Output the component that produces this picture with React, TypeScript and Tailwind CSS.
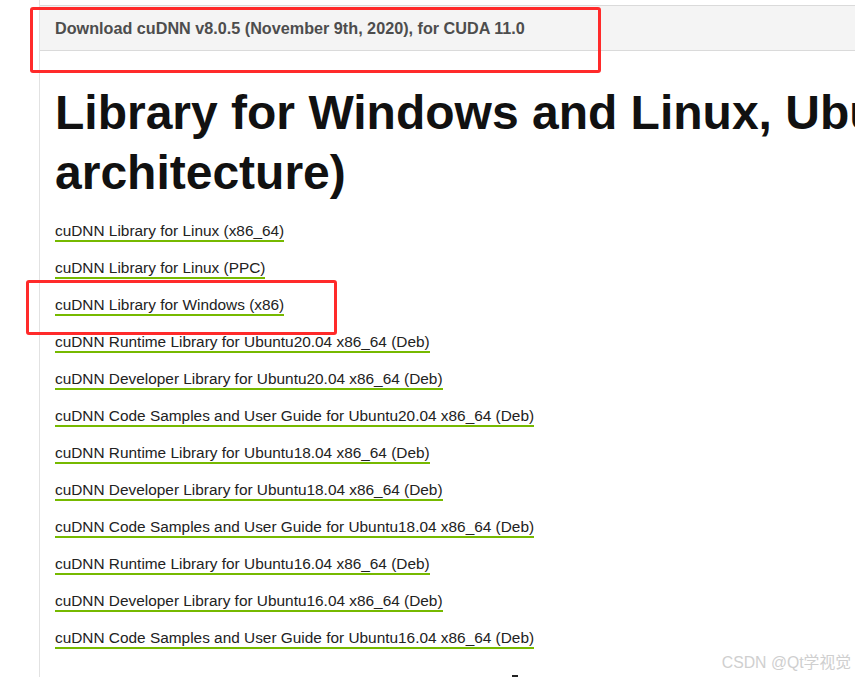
import React from 'react';

// ─── Data ─────────────────────────────────────────────────────────────────────

const LINKS: string[] = [
  'cuDNN Library for Linux (x86_64)',
  'cuDNN Library for Linux (PPC)',
  'cuDNN Library for Windows (x86)',
  'cuDNN Runtime Library for Ubuntu20.04 x86_64 (Deb)',
  'cuDNN Developer Library for Ubuntu20.04 x86_64 (Deb)',
  'cuDNN Code Samples and User Guide for Ubuntu20.04 x86_64 (Deb)',
  'cuDNN Runtime Library for Ubuntu18.04 x86_64 (Deb)',
  'cuDNN Developer Library for Ubuntu18.04 x86_64 (Deb)',
  'cuDNN Code Samples and User Guide for Ubuntu18.04 x86_64 (Deb)',
  'cuDNN Runtime Library for Ubuntu16.04 x86_64 (Deb)',
  'cuDNN Developer Library for Ubuntu16.04 x86_64 (Deb)',
  'cuDNN Code Samples and User Guide for Ubuntu16.04 x86_64 (Deb)',
];

// ─── Page ─────────────────────────────────────────────────────────────────────

export default function App() {
  return (
    <div className="relative w-[855px] h-[677px] overflow-hidden bg-white font-['Liberation_Sans',Arial,sans-serif]">
      <div className="ml-[39px] h-full border-l border-[#e2e2e2] pt-[5px]">
        {/* Release header band */}
        <div className="flex h-[46px] items-center border-y border-[#dadada] bg-[#f4f4f4] px-[15px]">
          <span className="text-[16.2px] font-bold text-[#4d4d4d] whitespace-nowrap">
            Download cuDNN v8.0.5 (November 9th, 2020), for CUDA 11.0
          </span>
        </div>

        {/* Title — runs past the right edge like the page does */}
        <h1 className="mt-[32px] pl-[15px] text-[48px] font-bold leading-[60px] text-[#111] whitespace-nowrap">
          <div>Library for Windows and Linux, Ubuntu(x86_64</div>
          <div>architecture)</div>
        </h1>

        {/* Download links */}
        <ul className="mt-[16px] flex flex-col gap-[17px] pl-[15px]">
          {LINKS.map((l) => (
            <li key={l} className="h-[20px]">
              <a className="inline-block border-b-2 border-[#76b900] text-[15.4px] leading-[18px] text-[#222] whitespace-nowrap">
                {l}
              </a>
            </li>
          ))}
        </ul>
      </div>

      {/* ── Annotation boxes ── */}
      <div className="absolute left-[30px] top-[7px] w-[571px] h-[66px] rounded-[3px] border-[3px] border-[#ff2a2a]" />
      <div className="absolute left-[26px] top-[280px] w-[311px] h-[55px] rounded-[3px] border-[3px] border-[#ff2a2a]" />

      {/* stray mark at bottom edge */}
      <div className="absolute left-[512px] top-[675px] w-[6px] h-[2px] bg-[#222]" />

      {/* Watermark */}
      <div className="absolute right-[4px] top-[651px] text-[15.8px] text-[#cfcfcf] whitespace-nowrap font-['Liberation_Sans','Noto_Sans_CJK_SC',sans-serif]">
        CSDN @Qt学视觉
      </div>
    </div>
  );
}
